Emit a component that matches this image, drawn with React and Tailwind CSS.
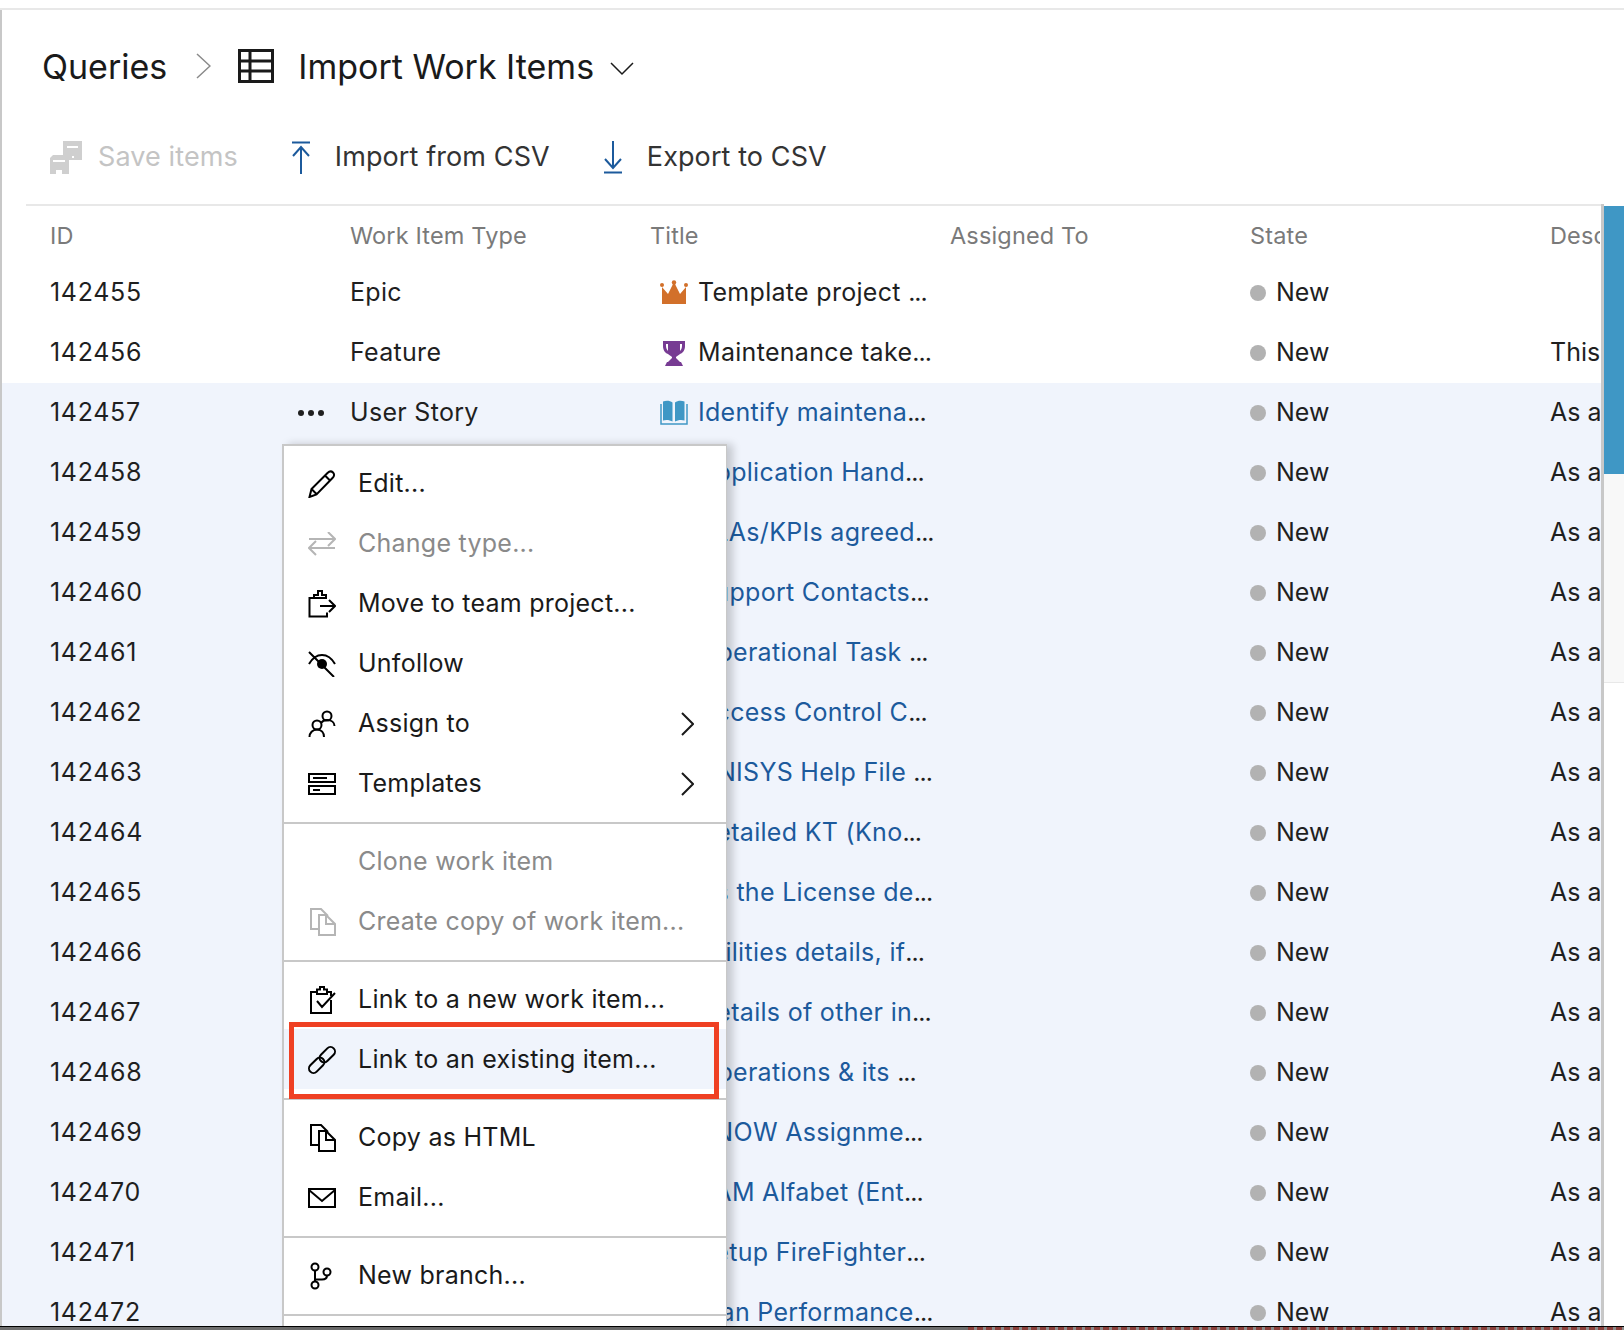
import React from "react";

const titles = [
  "Application Hand...",
  "SLAs/KPIs agreed...",
  "Support Contacts...",
  "Operational Task ...",
  "Access Control C...",
  "UNISYS Help File ...",
  "Detailed KT (Kno...",
  "As the License de...",
  "Utilities details, if...",
  "Details of other in...",
  "Operations & its ...",
  "SNOW Assignme...",
  "SAM Alfabet (Ent...",
  "Setup FireFighter...",
  "Plan Performance...",
];

const CrownIcon = () => (
  <svg width="28" height="26" viewBox="0 0 28 26" className="shrink-0">
    <path d="M2 24V7l6 7 6-12 6 12 6-7v17z" fill="#d2702a" />
    <circle cx="2" cy="5" r="2" fill="#d2702a" />
    <circle cx="14" cy="2.5" r="2.2" fill="#d2702a" />
    <circle cx="26" cy="5" r="2" fill="#d2702a" />
  </svg>
);

const TrophyIcon = () => (
  <svg width="28" height="28" viewBox="0 0 28 28" className="shrink-0">
    <path d="M3 2h22v5c0 4-2 7-5 8-1 1-3 2-4 3v1l4 4H8l4-4v-1c-1-1-3-2-4-3-3-1-5-4-5-8z" fill="#773b93" />
    <path d="M7 23h14l2 4H5z" fill="#773b93" />
    <path d="M6 5h2v7c-1-1-2-3-2-5zM22 5h-2v7c1-1 2-3 2-5z" fill="#ffffff" />
  </svg>
);

const BookIcon = () => (
  <svg width="28" height="26" viewBox="0 0 28 26" className="shrink-0">
    <path d="M3 1.500c3-1 7-1 9.500 1v19c-2.500-1.500-6.500-2-9.500-1zM24.500 1.500c-3-1-7-1-9.500 1v19c2.500-1.500 6.500-2 9.500-1z" fill="#3f97c5" />
    <path d="M1 4v20h26V4" fill="none" stroke="#3f97c5" strokeWidth="1.500" />
  </svg>
);

const Dot = () => <span className="w-4 h-4 rounded-full bg-[#b2b2b2] shrink-0" />;

const Row = ({ id, type, icon, title, link, desc, selected, dots }) => (
  <div className={`grid grid-cols-[300px_300px_300px_300px_300px_50px] h-[60px] shrink-0 items-center pl-[48px] overflow-hidden ${selected ? "bg-[#f0f4fc]" : ""}`}>
    <div className="relative h-full flex items-center tracking-[0.7px]">
      {id}
      {dots && (
        <span className="absolute left-[248px] top-[27px] flex gap-[4px]">
          <span className="w-[6px] h-[6px] rounded-full bg-[#1f1f1f]" />
          <span className="w-[6px] h-[6px] rounded-full bg-[#1f1f1f]" />
          <span className="w-[6px] h-[6px] rounded-full bg-[#1f1f1f]" />
        </span>
      )}
    </div>
    <div className="tracking-[0.3px]">{type}</div>
    <div className="flex items-center gap-[10px] pl-[10px] whitespace-nowrap">
      {icon}
      <span className="tracking-[0.3px]">
        <span className={link ? "text-[#1c5a9c]" : ""}>{title.slice(0, -3)}</span>
        <span className="tracking-[-1px]">...</span>
      </span>
    </div>
    <div />
    <div className="flex items-center gap-[10px]">
      <Dot />
      New
    </div>
    <div className="whitespace-nowrap overflow-hidden">{desc}</div>
  </div>
);

const S = { stroke: "currentColor", strokeWidth: 2, fill: "none" };

const menuIcons = {
  edit: (
    <svg width="28" height="28" viewBox="0 0 28 28" {...S}>
      <path d="M1.500 27l2-8L19.500 3c2-2 4-2 5.500-.5s1.500 3.500-.5 5.500L8.500 24.500zM3.500 19l5.500 5.500M17 5.500l5.500 5.500" />
    </svg>
  ),
  change: (
    <svg width="28" height="24" viewBox="0 0 28 24" {...S}>
      <path d="M1 17h26M8 10l-7 7 7 7M1 8h26M20 1l7 7-7 7" transform="translate(0 -1)" />
    </svg>
  ),
  move: (
    <svg width="28" height="28" viewBox="0 0 28 28" {...S}>
      <path d="M19 8h-1V5h-4V1h-4v4H6v3H1.500v18.500H19v-4M6 8h12M12 16h15M21 10l6 6-6 6" />
    </svg>
  ),
  unfollow: (
    <svg width="28" height="26" viewBox="0 0 28 26" {...S}>
      <path d="M1 13C5 6 10 4 14 4s9 2 13 9M1 1l25 25" />
      <circle cx="14" cy="13" r="5" fill="currentColor" stroke="none" />
    </svg>
  ),
  assign: (
    <svg width="28" height="28" viewBox="0 0 28 28" {...S}>
      <circle cx="19" cy="6" r="4.500" />
      <circle cx="9" cy="15" r="4.500" />
      <path d="M1.500 27c0-4 3-7.500 7.500-7.500s7 3.500 7 7.500M13 13c1-1.500 3-3 6-3 4.500 0 7.500 2.500 7.500 6" />
    </svg>
  ),
  templates: (
    <svg width="28" height="22" viewBox="0 0 28 22" {...S}>
      <path d="M1 1h26v8H1zM1 13h26v8H1zM5 5h14M5 17h7" />
    </svg>
  ),
  copy: (
    <svg width="28" height="28" viewBox="0 0 28 28" {...S} className="ml-[2px]">
      <path d="M9 21H1V1h10l7 7M9 7h7l9 9v11H9zM16 7v9h9" />
    </svg>
  ),
  linkNew: (
    <svg width="26" height="28" viewBox="0 0 26 28" {...S} className="ml-[2px]">
      <path d="M21 14v13H1V6h6M16 6h5v4M7 3.500h3V1h4v2.500h3V8H7zM7 15l5 6L25 7" />
    </svg>
  ),
  link: (
    <svg width="28" height="28" viewBox="0 0 28 28" {...S}>
      <g transform="rotate(-45 14 14)">
        <rect x="-2.500" y="9.500" width="18" height="9" rx="4.500" />
        <rect x="12.500" y="9.500" width="18" height="9" rx="4.500" />
      </g>
    </svg>
  ),
  mail: (
    <svg width="28" height="20" viewBox="0 0 28 20" {...S}>
      <path d="M1 1h26v18H1zM1 2l13 11L27 2" />
    </svg>
  ),
  branch: (
    <svg width="22" height="28" viewBox="0 0 22 28" {...S} className="ml-[2px]">
      <circle cx="5" cy="5" r="3.500" />
      <circle cx="5" cy="23" r="3.500" />
      <circle cx="17" cy="10" r="3.500" />
      <path d="M5 8.500v11M17 13.500c0 3-2 4-5 4H5" />
    </svg>
  ),
};

const Chevron = () => (
  <svg width="13" height="24" viewBox="0 0 13 24" fill="none" stroke="currentColor" strokeWidth="2" className="ml-auto mr-[32px]">
    <path d="M1 1l11 11L1 23" />
  </svg>
);

const MenuItem = ({ icon, label, disabled, arrow, active }) => (
  <div className={`flex items-center h-[60px] pt-[2px] shrink-0 tracking-[0.25px] ${disabled ? "text-[#8a8a8a]" : "text-[#1a1a1a]"} ${active ? "bg-[#f0f4fc]" : ""}`}>
    <span className={`w-[74px] pl-[24px] flex items-center shrink-0 ${disabled ? "text-[#b5b5b5]" : "text-black"}`}>{icon}</span>
    <span>{label}</span>
    {arrow && <Chevron />}
  </div>
);

const Sep = () => <div className="h-[2px] bg-[#c8c8c8] mt-[9px] mb-[7px] shrink-0" />;

const ContextMenu = () => (
  <div className="absolute left-[282px] top-[444px] w-[445px] h-[882px] bg-white border-l-2 border-r border-t-2 border-[#c8c8c8] shadow-[6px_0_8px_rgba(0,0,0,0.18)] flex flex-col pt-[7px] overflow-hidden">
    <MenuItem icon={menuIcons.edit} label="Edit..." />
    <MenuItem icon={menuIcons.change} label="Change type..." disabled />
    <MenuItem icon={menuIcons.move} label="Move to team project..." />
    <MenuItem icon={menuIcons.unfollow} label="Unfollow" />
    <MenuItem icon={menuIcons.assign} label="Assign to" arrow />
    <MenuItem icon={menuIcons.templates} label="Templates" arrow />
    <Sep />
    <MenuItem label="Clone work item" disabled />
    <MenuItem icon={menuIcons.copy} label="Create copy of work item..." disabled />
    <Sep />
    <MenuItem icon={menuIcons.linkNew} label="Link to a new work item..." />
    <MenuItem icon={menuIcons.link} label="Link to an existing item..." active />
    <Sep />
    <MenuItem icon={menuIcons.copy} label="Copy as HTML" />
    <MenuItem icon={menuIcons.mail} label="Email..." />
    <Sep />
    <MenuItem icon={menuIcons.branch} label="New branch..." />
    <Sep />
  </div>
);

export default function App() {
  return (
    <div className="relative w-[1624px] h-[1330px] overflow-hidden bg-white text-[25px] text-[#1f1f1f] font-['Inter',sans-serif]">
      <div className="h-[8px]" />
      <div className="h-[2px] bg-[#e8e8e8]" />
      <div className="border-l-2 border-[#c8c8c8] h-[1316px] flex flex-col">
        {/* breadcrumb */}
        <div className="h-[112px] shrink-0 pl-[40px] flex items-center text-[34px] text-[#1a1a1a]">
          <span>Queries</span>
          <svg width="15" height="26" viewBox="0 0 15 26" fill="none" stroke="#8a8a8a" strokeWidth="1.500" className="ml-[29px] mr-[27px]">
            <path d="M1 1l13 12L1 25" />
          </svg>
          <svg width="36" height="34" viewBox="0 0 36 34" fill="none" stroke="#1a1a1a" strokeWidth="3">
            <path d="M1.500 1.500h33v31h-33zM1.500 12h33M1.500 22h33M12 1.500v31" />
          </svg>
          <span className="ml-[24px]">Import Work Items</span>
          <svg width="24" height="14" viewBox="0 0 24 14" fill="none" stroke="#1a1a1a" strokeWidth="1.500" className="ml-[16px] mt-[6px]">
            <path d="M1 1l11 11L23 1" />
          </svg>
        </div>
        {/* toolbar */}
        <div className="h-[70px] mb-[12px] shrink-0 pl-[48px] flex items-center text-[27px] tracking-[0.1px] text-[#333]">
          <svg width="33" height="33" viewBox="0 0 33 33">
            <path d="M13 0h19v19H13z" fill="#cfcfcf" />
            <path d="M17 5h11v2H17zM22 15h2v2h-2z" fill="#ffffff" />
            <path d="M3 14h13l3 3v16H0V17z" fill="#cfcfcf" />
            <path d="M3 19h12v2H3zM6 29h6v4H6z" fill="#ffffff" />
          </svg>
          <span className="ml-[15px] text-[#c4c4c4]">Save items</span>
          <svg width="20" height="33" viewBox="0 0 20 33" fill="none" stroke="#1c5a9c" strokeWidth="2" className="ml-[53px]">
            <path d="M1 1.500h18M10 33V6M2 15l8-9 8 9" />
          </svg>
          <span className="ml-[24px]">Import from CSV</span>
          <svg width="20" height="33" viewBox="0 0 20 33" fill="none" stroke="#1c5a9c" strokeWidth="2" className="ml-[53px]">
            <path d="M1 31.500h18M10 0v27M2 18l8 9 8-9" />
          </svg>
          <span className="ml-[24px]">Export to CSV</span>
        </div>
        <div className="flex-1 flex min-h-0">
          <div className="w-[1599px] min-h-0 overflow-hidden flex flex-col">
            <div className="ml-[24px] h-[2px] bg-[#e8e8e8] shrink-0" />
            <div className="grid grid-cols-[300px_300px_300px_300px_300px_50px] h-[57px] pt-[3px] shrink-0 items-center pl-[48px] text-[23.500px] tracking-[0.15px] text-[#7a7a7a] overflow-hidden">
              <div>ID</div>
              <div>Work Item Type</div>
              <div>Title</div>
              <div>Assigned To</div>
              <div>State</div>
              <div className="whitespace-nowrap overflow-hidden">Description</div>
            </div>
            <Row id="142455" type="Epic" icon={<CrownIcon />} title="Template project ..." />
            <Row id="142456" type="Feature" icon={<TrophyIcon />} title="Maintenance take..." desc="This" />
            <Row id="142457" type="User Story" icon={<BookIcon />} title="Identify maintena..." link desc="As a" selected dots />
            {titles.map((t, i) => (
              <Row key={t} id={String(142458 + i)} icon={<BookIcon />} title={t} link desc="As a" selected />
            ))}
          </div>
          <div className="w-[23px] border-l-[3px] border-[#c8c8c8] pt-[2px]">
            <div className="h-[268px] bg-[#3f97c5]" />
            <div className="h-[209px] bg-[#f8f8f8] border-b border-[#e8e8e8]" />
          </div>
        </div>
      </div>
      <div className="absolute left-0 right-0 bottom-0 h-[4px] border-t border-black flex">
        <div className="w-[968px] bg-[#6e6e6e]" />
        <div className="flex-1 bg-[repeating-linear-gradient(90deg,#8a3f3a_0_6px,#8c8c8c_6px_9px)]" />
      </div>
      <ContextMenu />
      <div className="absolute left-[289px] top-[1022px] w-[430px] h-[77px] border-[5px] border-[#ef4023]" />
    </div>
  );
}
